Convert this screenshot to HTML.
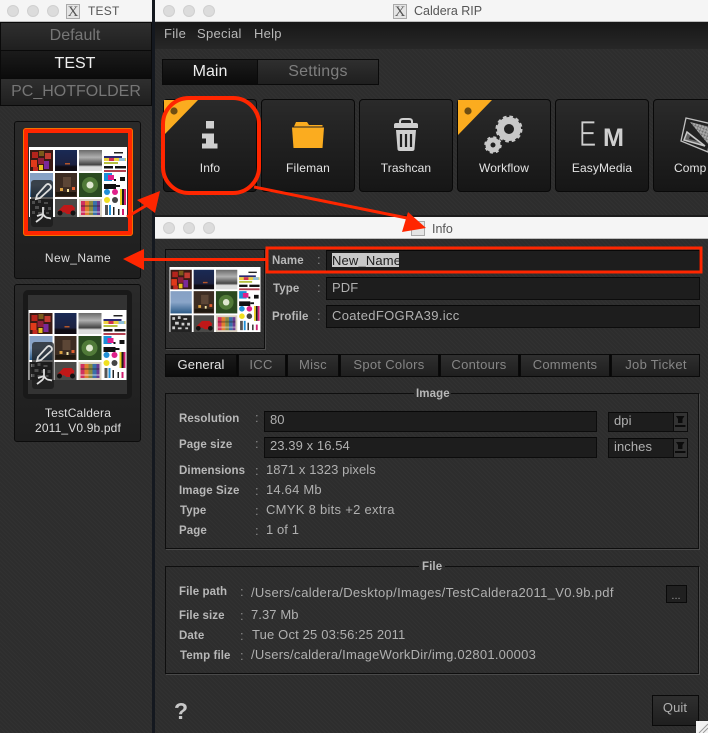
<!DOCTYPE html>
<html><head><meta charset="utf-8"><title>Caldera RIP</title>
<style>
html,body{margin:0;padding:0;background:#14181f}
#p{position:relative;width:708px;height:733px;overflow:hidden;font-family:"Liberation Sans",sans-serif;background:#14181f}
#p div,#p span.t{position:absolute;box-sizing:border-box}
.t{position:absolute;white-space:nowrap;line-height:14px;font-size:13px;color:#b4b4b4}
.c{transform:translateX(-50%)}
.l{font-weight:bold;font-size:11.5px;color:#b8b8b8;letter-spacing:.1px}
.v{font-size:13px;color:#b0b0b0;letter-spacing:.08px}
.k{font-size:13px;color:#8a8a8a}
.bar{background:#f5f5f5;border-bottom:1px solid #bdbdbd}
.dot{width:12px;height:12px;border-radius:50%;background:#dcdcdc;border:1px solid #d0d0d0;top:5px}
.bg{background-color:#2d2d2d;background-image:repeating-linear-gradient(45deg,rgba(255,255,255,.018) 0 1px,transparent 1px 3px)}
.tab{background:linear-gradient(#2f2f2f,#1f1f1f);border:1px solid #0a0a0a}
.on{background:linear-gradient(#1b1b1b,#0b0b0b)}
.btn{background:linear-gradient(#2a2a2a,#161616);border:1px solid #090909;border-radius:4px;top:99px;height:93px;width:94px}
.bl{font-size:12px;color:#e4e4e4;top:161px;letter-spacing:.1px}
.inp{background:#1d1d1d;border:1px solid #0c0c0c;border-top-color:#080808}
.grp{border:1px solid #0e0e0e;border-right-color:#111;box-shadow:1px 1px 0 #4a4a4a}
.lt{font-size:16px;color:#767676;line-height:18px}
.it{font-size:13px;color:#868686;top:358px;letter-spacing:.3px}
svg{position:absolute;left:0;top:0}
</style></head><body><div id="p">

<!-- left window -->
<div class="bg" style="left:0;top:0;width:152px;height:733px"></div>
<div class="bar" style="left:0;top:0;width:152px;height:22px"></div>
<div class="dot" style="left:7px"></div><div class="dot" style="left:27px"></div><div class="dot" style="left:47px"></div>
<div style="left:66px;top:4px;width:14px;height:15px;background:#e4e4e4;border:1px solid #aaa"></div>
<span class="t c" style="left:73px;top:5px;font-family:'Liberation Serif',serif;font-size:15px;color:#555">X</span>
<span class="t" style="left:88px;top:4px;font-size:12px;color:#555;letter-spacing:.2px">TEST</span>

<div class="tab" style="left:0;top:22px;width:152px;height:29px"></div>
<div class="tab on" style="left:0;top:50px;width:152px;height:29px"></div>
<div class="tab" style="left:0;top:78px;width:152px;height:28px"></div>
<span class="t c lt" style="left:75px;top:27px">Default</span>
<span class="t c lt" style="left:75px;top:55px;color:#eee">TEST</span>
<span class="t c lt" style="left:76px;top:83px">PC_HOTFOLDER</span>

<div style="left:14px;top:121px;width:127px;height:158px;background:linear-gradient(#2a2a2a,#1e1e1e);border:1px solid #0c0c0c;border-radius:3px"></div>
<div style="left:14px;top:284px;width:127px;height:158px;background:linear-gradient(#2a2a2a,#1e1e1e);border:1px solid #0c0c0c;border-radius:3px"></div>
<div style="left:23px;top:128px;width:110px;height:108px;background:#2e2e2e;border:5px solid #ff2600;outline:1px solid #f07000;outline-offset:-1px;border-radius:3px"></div>
<div style="left:23px;top:290px;width:109px;height:109px;background:#333;border:5px solid #191919;border-radius:5px"></div>

<span class="t c" style="left:78px;top:251px;font-size:12px;color:#ddd;letter-spacing:.45px">New_Name</span>
<span class="t c" style="left:78px;top:406px;font-size:12px;color:#ddd;letter-spacing:.2px">TestCaldera</span>
<span class="t c" style="left:78px;top:421px;font-size:12px;color:#ddd;letter-spacing:.15px">2011_V0.9b.pdf</span>

<!-- main window -->
<div class="bg" style="left:155px;top:0;width:553px;height:217px"></div>
<div class="bar" style="left:155px;top:0;width:553px;height:22px"></div>
<div class="dot" style="left:163px"></div><div class="dot" style="left:183px"></div><div class="dot" style="left:203px"></div>
<div style="left:393px;top:4px;width:14px;height:15px;background:#e4e4e4;border:1px solid #aaa"></div>
<span class="t c" style="left:400px;top:5px;font-family:'Liberation Serif',serif;font-size:15px;color:#555">X</span>
<span class="t" style="left:414px;top:4px;font-size:12.5px;color:#555">Caldera RIP</span>

<div style="left:155px;top:22px;width:553px;height:27px;background:linear-gradient(#171717,#272727)"></div>
<span class="t" style="left:164px;top:27px;color:#b8b8b8;letter-spacing:.3px">File</span>
<span class="t" style="left:197px;top:27px;color:#b8b8b8;letter-spacing:.3px">Special</span>
<span class="t" style="left:254px;top:27px;color:#b8b8b8;letter-spacing:.25px">Help</span>

<div class="tab on" style="left:162px;top:59px;width:96px;height:26px"></div>
<div class="tab" style="left:257px;top:59px;width:122px;height:26px"></div>
<span class="t c" style="left:210px;top:63px;font-size:16px;line-height:18px;color:#eee">Main</span>
<span class="t c" style="left:318px;top:63px;font-size:16px;line-height:18px;color:#7e7e7e;letter-spacing:.2px">Settings</span>

<div class="btn" style="left:163px"></div>
<div class="btn" style="left:261px"></div>
<div class="btn" style="left:359px"></div>
<div class="btn" style="left:457px"></div>
<div class="btn" style="left:555px"></div>
<div class="btn" style="left:653px;width:70px"></div>
<span class="t c bl" style="left:210px">Info</span>
<span class="t c bl" style="left:308px;letter-spacing:.2px">Fileman</span>
<span class="t c bl" style="left:406px">Trashcan</span>
<span class="t c bl" style="left:504px">Workflow</span>
<span class="t c bl" style="left:602px">EasyMedia</span>
<span class="t bl" style="left:674px">Comp</span>

<svg width="708" height="216" style="z-index:1">
 <defs><pattern id="hat" width="3" height="3" patternUnits="userSpaceOnUse" patternTransform="rotate(20)"><rect width="3" height="3" fill="#a8a8a8"/><path d="M0 0h3M0 0v3" stroke="#555" stroke-width=".8"/></pattern></defs>
 <polygon points="164,100 198,100 164,135" fill="#fbac1f"/><circle cx="174" cy="111" r="3.6" fill="#6e4d12"/>
 <polygon points="458,100 492,100 458,135" fill="#fbac1f"/><circle cx="468" cy="111" r="3.6" fill="#6e4d12"/>
 <!-- i -->
 <path d="M206 121h8v7.500h-8zM202 133.500h12v10h3.500v5h-15.500v-5h4v-5h-4z" fill="#cfcfcf"/>
 <!-- folder -->
 <path d="M294 126.500l2-4.500h11l2 3h13.500v1.500z" fill="#fbac1f"/>
 <path d="M292 127.500h32l-1.500 20.500h-29z" fill="#fbac1f"/>
 <!-- trash -->
 <path d="M400 124v-2.500q0-2.500 3-2.500h6q3 0 3 2.500v2.500" fill="none" stroke="#cfcfcf" stroke-width="2"/>
 <path d="M396 123h20q2 0 2 2v3h-24v-3q0-2 2-2z" fill="#cfcfcf"/>
 <path d="M396 130h20l-1.500 19q0 2-2.500 2h-12q-2.500 0-2.500-2z" fill="#cfcfcf"/>
 <path d="M401 134v13M406 134v13M411 134v13" stroke="#1f1f1f" stroke-width="2.200"/>
 <!-- gears -->
 <circle cx="509" cy="129" r="8.500" fill="none" stroke="#c8c8c8" stroke-width="7"/>
 <circle cx="509" cy="129" r="12" fill="none" stroke="#c8c8c8" stroke-width="3" stroke-dasharray="3.500 2.780"/>
 <circle cx="493" cy="145" r="5" fill="none" stroke="#c8c8c8" stroke-width="5"/>
 <circle cx="493" cy="145" r="7.500" fill="none" stroke="#c8c8c8" stroke-width="2.500" stroke-dasharray="3 2.890"/>
 <!-- Em -->
 <text transform="translate(579 146) scale(.72 1)" font-family="Liberation Sans" font-size="36" fill="#cfcfcf" stroke="#1f1f1f" stroke-width=".8" style="paint-order:fill stroke">E</text>
 <text x="603" y="146" font-family="Liberation Sans" font-weight="bold" font-size="25" fill="#cfcfcf" textLength="21" lengthAdjust="spacingAndGlyphs">M</text>
 <!-- comp -->
 <polygon points="686,118 712,124 708,152 681,141" fill="#222" stroke="#c0c0c0" stroke-width="1.300"/>
 <polygon points="690,122 710,127 708,144" fill="url(#hat)"/>
 <polygon points="687,132 705,146 684,140" fill="#666" stroke="#c8c8c8" stroke-width="1.500"/>
 <polygon points="690,136 697,141 689,139" fill="#222"/>
</svg>

<!-- info window -->
<div style="left:155px;top:215px;width:553px;height:2px;background:#1c1c1c"></div>
<div class="bg" style="left:155px;top:217px;width:553px;height:516px"></div>
<div class="bar" style="left:155px;top:217px;width:553px;height:22px"></div>
<div class="dot" style="left:163px;top:222px"></div><div class="dot" style="left:183px;top:222px"></div><div class="dot" style="left:203px;top:222px"></div>
<div style="left:411px;top:221px;width:14px;height:15px;background:#e4e4e4;border:1px solid #aaa"></div>
<span class="t" style="left:432px;top:222px;font-size:12.5px;color:#555">Info</span>

<div style="left:165px;top:249px;width:100px;height:100px;border:1px solid #0e0e0e;box-shadow:1px 1px 0 #4a4a4a"></div>

<div class="inp" style="left:326px;top:250px;width:374px;height:22px"></div>
<div class="inp" style="left:326px;top:277px;width:374px;height:23px"></div>
<div class="inp" style="left:326px;top:305px;width:374px;height:23px"></div>
<div style="left:332px;top:253px;width:67px;height:14px;background:#c9c9c9"></div>
<span class="t l" style="left:272px;top:254px">Name</span>
<span class="t l" style="left:273px;top:282px">Type</span>
<span class="t l" style="left:272px;top:310px">Profile</span>
<span class="t k" style="left:317px;top:253px">:</span><span class="t k" style="left:317px;top:281px">:</span><span class="t k" style="left:317px;top:309px">:</span>
<span class="t v" style="left:332px;top:254px;color:#1d1d1d;letter-spacing:.15px">New_Name</span>
<span class="t v" style="left:332px;top:281px">PDF</span>
<span class="t v" style="left:332px;top:309px;letter-spacing:.32px">CoatedFOGRA39.icc</span>

<div style="left:165px;top:354px;width:535px;height:23px;background:#070707"></div>
<div class="tab on" style="left:165px;top:354px;width:72px;height:23px"></div>
<div class="tab" style="left:238px;top:354px;width:48px;height:23px"></div>
<div class="tab" style="left:287px;top:354px;width:52px;height:23px"></div>
<div class="tab" style="left:340px;top:354px;width:99px;height:23px"></div>
<div class="tab" style="left:440px;top:354px;width:79px;height:23px"></div>
<div class="tab" style="left:520px;top:354px;width:90px;height:23px"></div>
<div class="tab" style="left:611px;top:354px;width:89px;height:23px"></div>
<span class="t c it" style="left:201px;color:#e4e4e4;letter-spacing:.1px">General</span>
<span class="t c it" style="left:261px">ICC</span>
<span class="t c it" style="left:313px">Misc</span>
<span class="t c it" style="left:389px">Spot Colors</span>
<span class="t c it" style="left:479px">Contours</span>
<span class="t c it" style="left:565px;letter-spacing:.2px">Comments</span>
<span class="t c it" style="left:656px">Job Ticket</span>

<!-- image group -->
<div class="grp" style="left:165px;top:393px;width:534px;height:156px"></div>
<div class="bg" style="left:414px;top:388px;width:37px;height:10px"></div>
<span class="t l" style="left:416px;top:387px;font-size:11.5px">Image</span>
<span class="t l" style="left:179px;top:412px">Resolution</span>
<span class="t l" style="left:179px;top:438px">Page size</span>
<span class="t l" style="left:179px;top:464px">Dimensions</span>
<span class="t l" style="left:179px;top:484px">Image Size</span>
<span class="t l" style="left:180px;top:504px">Type</span>
<span class="t l" style="left:179px;top:524px">Page</span>
<span class="t k" style="left:255px;top:411px">:</span><span class="t k" style="left:255px;top:437px">:</span><span class="t k" style="left:255px;top:464px">:</span><span class="t k" style="left:255px;top:484px">:</span><span class="t k" style="left:255px;top:504px">:</span><span class="t k" style="left:255px;top:524px">:</span>
<div class="inp" style="left:264px;top:411px;width:333px;height:21px"></div>
<div class="inp" style="left:264px;top:437px;width:333px;height:21px"></div>
<span class="t v" style="left:270px;top:413px">80</span>
<span class="t v" style="left:270px;top:439px">23.39 x 16.54</span>
<span class="t v" style="left:266px;top:463px">1871 x 1323 pixels</span>
<span class="t v" style="left:266px;top:483px;letter-spacing:.2px">14.64 Mb</span>
<span class="t v" style="left:266px;top:503px;letter-spacing:.28px">CMYK 8 bits +2 extra</span>
<span class="t v" style="left:266px;top:523px">1 of 1</span>

<div class="inp" style="left:608px;top:412px;width:80px;height:20px"></div>
<div class="inp" style="left:608px;top:438px;width:80px;height:20px"></div>
<div style="left:673px;top:412px;width:15px;height:20px;background:#333;border:1px solid #0c0c0c"></div>
<div style="left:673px;top:438px;width:15px;height:20px;background:#333;border:1px solid #0c0c0c"></div>
<span class="t v" style="left:614px;top:414px">dpi</span>
<span class="t v" style="left:614px;top:440px">inches</span>

<!-- file group -->
<div class="grp" style="left:165px;top:566px;width:534px;height:108px"></div>
<div class="bg" style="left:419px;top:561px;width:26px;height:10px"></div>
<span class="t l" style="left:422px;top:560px;font-size:11.5px">File</span>
<span class="t l" style="left:179px;top:585px">File path</span>
<span class="t l" style="left:179px;top:609px">File size</span>
<span class="t l" style="left:179px;top:629px">Date</span>
<span class="t l" style="left:180px;top:649px">Temp file</span>
<span class="t k" style="left:240px;top:585px">:</span><span class="t k" style="left:240px;top:609px">:</span><span class="t k" style="left:240px;top:629px">:</span><span class="t k" style="left:240px;top:649px">:</span>
<span class="t v" style="left:251px;top:586px;letter-spacing:.32px">/Users/caldera/Desktop/Images/TestCaldera2011_V0.9b.pdf</span>
<span class="t v" style="left:251px;top:608px">7.37 Mb</span>
<span class="t v" style="left:252px;top:628px;letter-spacing:.16px">Tue Oct 25 03:56:25 2011</span>
<span class="t v" style="left:251px;top:648px;letter-spacing:.25px">/Users/caldera/ImageWorkDir/img.02801.00003</span>
<div class="tab" style="left:666px;top:585px;width:21px;height:18px;background:#202020"></div>
<span class="t c" style="left:676px;top:589px;font-size:11px;color:#999">...</span>
<div class="tab" style="left:652px;top:695px;width:47px;height:31px"></div>
<span class="t c v" style="left:675px;top:701px">Quit</span>
<span class="t" style="left:174px;top:699px;font-size:23px;line-height:24px;font-weight:bold;color:#c8c8c8">?</span>
<div style="left:696px;top:721px;width:12px;height:12px;background:#f2f2f2"></div>

<!-- thumbs + overlays -->
<svg width="708" height="733" style="z-index:2">
 <defs>
  <linearGradient id="g2" x1="0" y1="0" x2="0" y2="1"><stop offset="0" stop-color="#1a2a55"/><stop offset=".7" stop-color="#1c2140"/><stop offset=".8" stop-color="#100c14"/></linearGradient>
  <linearGradient id="g3" x1="0" y1="0" x2="0" y2="1"><stop offset="0" stop-color="#6a6a6a"/><stop offset=".35" stop-color="#b0b0b0"/><stop offset=".7" stop-color="#444"/><stop offset=".8" stop-color="#ddd"/></linearGradient>
  <linearGradient id="g5" x1="0" y1="0" x2="0" y2="1"><stop offset="0" stop-color="#86a0c4"/><stop offset=".5" stop-color="#8aa5c8"/><stop offset="1" stop-color="#2c5b88"/></linearGradient>
  <symbol id="th" viewBox="0 0 98 70">
   <rect width="98" height="70" fill="#fff"/>
   <rect x="1" y="3" width="23" height="21" fill="#3a1a14"/>
   <rect x="3" y="5" width="6" height="6" fill="#b5241c"/><rect x="10" y="4" width="5" height="5" fill="#7a5a1a"/><rect x="16" y="6" width="6" height="6" fill="#c23a30"/>
   <rect x="2" y="13" width="6" height="7" fill="#e03a1a"/><rect x="9" y="11" width="6" height="6" fill="#8f1f3a"/><rect x="15" y="14" width="5" height="8" fill="#7a2a9a"/><rect x="10" y="18" width="4" height="5" fill="#e8c020"/><rect x="4" y="20" width="5" height="4" fill="#c22a20"/>
   <rect x="26" y="3" width="22" height="21" fill="url(#g2)"/><rect x="36" y="16" width="5" height="1.500" fill="#b5552a"/>
   <rect x="50" y="3" width="23" height="21" fill="url(#g3)"/>
   <rect x="75" y="5" width="10" height="1" fill="#fff"/><rect x="85" y="5" width="9" height="1.500" fill="#222"/>
   <rect x="75" y="9" width="18" height="2" fill="#2a2a70"/><rect x="75" y="11" width="22" height="3" fill="#ecd040"/><rect x="80" y="11" width="5" height="3" fill="#d03050"/><rect x="90" y="11" width="6" height="3" fill="#8fc0d8"/>
   <rect x="75" y="15" width="14" height="2" fill="#b5c040"/><rect x="75" y="19" width="9" height="2.500" fill="#111"/><rect x="86" y="19" width="11" height="2.500" fill="#111"/><rect x="75" y="23" width="22" height="2" fill="#b04050"/>
   <rect x="1" y="26" width="23" height="24" fill="url(#g5)"/>
   <rect x="26" y="26" width="22" height="24" fill="#3c2c22"/><rect x="34" y="30" width="8" height="10" fill="#5c4636"/><rect x="31" y="41" width="3" height="3" fill="#d8a040"/><rect x="38" y="42" width="2" height="3" fill="#f0e0a0"/><rect x="43" y="40" width="3" height="3" fill="#e06030"/><rect x="27" y="45" width="20" height="4" fill="#20180f"/>
   <rect x="50" y="26" width="23" height="24" fill="#2a4a20"/><circle cx="61" cy="38" r="8" fill="#507a38"/><circle cx="61" cy="38" r="3.500" fill="#dfe8d0"/>
   <rect x="75" y="26" width="8" height="8" fill="#1a8fd8"/><rect x="79" y="28" width="6" height="5" fill="#e0208a"/><rect x="85" y="32" width="2" height="2" fill="#111"/><rect x="91" y="30" width="5" height="4" fill="#111"/>
   <rect x="75" y="37" width="12" height="5" fill="#111"/><rect x="87" y="38" width="4" height="2" fill="#111"/>
   <rect x="1" y="52" width="23" height="18" fill="#222"/>
   <path d="M3 54h3v3H3zM9 53h3v3H9zM15 55h4v2h-4zM6 59h4v3H6zM13 60h3v3h-3zM19 60h3v3h-3zM3 64h3v3H3zM9 65h4v2H9zM17 65h3v2h-3z" fill="#ccc"/>
   <rect x="26" y="52" width="22" height="18" fill="#4a4a48"/><path d="M29 64l6-6 8 0 3 3-2 6h-6l-3-2-4 2z" fill="#c01818"/><circle cx="31" cy="66" r="2.500" fill="#111"/><circle cx="44" cy="66" r="2.500" fill="#111"/>
   <rect x="50" y="52" width="23" height="18" fill="#d8d0c0"/>
   <rect x="52" y="54" width="4" height="14" fill="#d03060"/><rect x="56" y="54" width="4" height="14" fill="#e08030"/><rect x="60" y="54" width="4" height="14" fill="#8a8a40"/><rect x="64" y="54" width="4" height="14" fill="#3a70a8"/><rect x="68" y="54" width="3" height="14" fill="#6a3a90"/>
   <rect x="52" y="58" width="19" height="2" fill="#222" opacity=".35"/><rect x="52" y="64" width="19" height="2" fill="#fff" opacity=".35"/>
   <circle cx="78" cy="45" r="3" fill="#2090d8"/><circle cx="86" cy="45" r="3" fill="#e0208a"/><circle cx="78" cy="53" r="3" fill="#f0e020"/><circle cx="86" cy="53" r="3" fill="#444"/>
   <rect x="91" y="42" width="2" height="16" fill="#e8d020"/><rect x="93" y="42" width="2" height="16" fill="#1a1a1a"/><rect x="95" y="42" width="2" height="16" fill="#d02070"/>
   <rect x="76" y="58" width="3" height="10" fill="#555"/><rect x="80" y="58" width="2" height="10" fill="#2090d8"/><rect x="84" y="60" width="1.500" height="8" fill="#222"/><rect x="89" y="62" width="1.500" height="6" fill="#222"/><rect x="93" y="62" width="2" height="6" fill="#d02070"/>
  </symbol>
  <g id="ov">
   <rect x="0" y="0" width="22" height="47" rx="3" fill="#1a1a1a" fill-opacity=".72"/>
   <path d="M5 19l1-4 9-10q2-2 4 0t0 4l-10 9z" fill="none" stroke="#ddd" stroke-width="1.800"/>
   <path d="M12 27v7q0 3-3 5l-4 3M12 34q2 4 6 4l2 .5M12 34l-6 2" fill="none" stroke="#ddd" stroke-width="1.800"/>
  </g>
 </defs>
 <use href="#th" x="29" y="147" width="98" height="70"/>
 <use href="#th" x="28" y="310" width="99" height="70"/>
 <use href="#th" x="169" y="267" width="92" height="65"/>
 <use href="#ov" x="31" y="180"/>
 <use href="#ov" x="32" y="342"/>
</svg>

<!-- dropdown arrows + annotations -->
<svg width="708" height="733" style="z-index:3">
 <path d="M676 416h8.500l-2 3v4h-4.500v-4zM675 425h10.500v2h-10.500z" fill="#0c0c0c"/>
 <path d="M676 442h8.500l-2 3v4h-4.500v-4zM675 451h10.500v2h-10.500z" fill="#0c0c0c"/>
 <path d="M699 733L708 724M703 733L708 728" stroke="#999" stroke-width="1"/>
 <!-- red annotations -->
 <rect x="163" y="98" width="96" height="95" rx="26" fill="none" stroke="#ff2600" stroke-width="4"/>
 <rect x="267" y="248" width="434" height="24" fill="none" stroke="#ff2600" stroke-width="3"/>
 <path d="M254 187L407 218" stroke="#ff2600" stroke-width="3"/>
 <polygon points="408,212 402,232 426,228" fill="#ff2600"/>
 <path d="M127 217L147 205" stroke="#ff2600" stroke-width="3"/>
 <polygon points="137,200 155,213 160,191" fill="#ff2600"/>
 <path d="M142 259.500H267" stroke="#ff2600" stroke-width="3"/>
 <polygon points="123,259 144,249 144,270" fill="#ff2600"/>
</svg>
</div></body></html>
